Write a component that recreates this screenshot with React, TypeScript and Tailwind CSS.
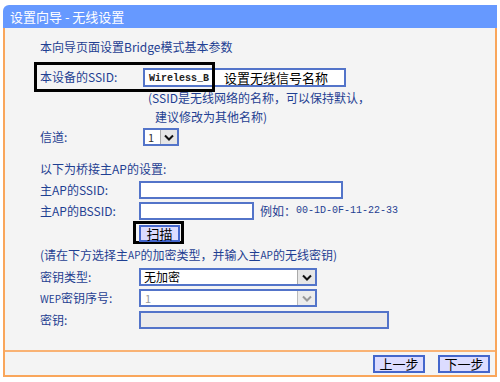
import React from "react";

const Chevron = ({ color = "#111" }: { color?: string }) => (
  <svg width="10" height="7" viewBox="0 0 10 7">
    <path d="M1 1.5 L5 5.5 L9 1.5" fill="none" stroke={color} strokeWidth="2" />
  </svg>
);

export default function App() {
  return (
    <div className="w-[500px] h-[382px] bg-white pt-[5px] px-[3px] font-['Noto_Sans_CJK_SC',sans-serif]">
      <div className="h-[23px] bg-[#6699ff] rounded-tl-[6px] flex items-center pl-[7px] text-white text-[13px] leading-none">
        设置向导 - 无线设置
      </div>
      <div className="h-[349px] w-[494px] border-l-2 border-r-2 border-b-2 border-[#f9a65b] bg-[#f4f4f4] flex flex-col">
        <div className="h-[322px] flex flex-col pl-[35px] text-[12px] text-[#1f3f92] leading-none">
          <div className="mt-[10px] h-[18px] flex items-center">本向导页面设置Bridge模式基本参数</div>

          <div className="mt-[6px] h-[30px] relative flex items-center">
            <span className="w-[103px]">本设备的SSID:</span>
            <div className="h-[19px] w-[203px] border-2 border-[#5374c9] bg-white flex items-center pl-[4px]">
              <span className="font-['Liberation_Mono',monospace] font-bold text-[10px] leading-[15px] text-[#222] translate-y-[1px]">Wireless_B</span>
              <span className="ml-[15px] text-[13px] leading-[15px] text-black">设置无线信号名称</span>
            </div>
            <div className="absolute left-[-6px] top-0 w-[181px] h-[30px] border-[3px] border-black"></div>
          </div>

          <div className="mt-[-4px] flex flex-col">
            <div className="h-[19px] flex items-center pl-[108px]">(SSID是无线网络的名称，可以保持默认，</div>
            <div className="h-[19px] flex items-center pl-[115px]">建议修改为其他名称)</div>
          </div>

          <div className="mt-[1px] h-[20px] flex items-center">
            <span className="w-[103px]">信道:</span>
            <div className="h-[18px] w-[36px] border-2 border-[#5374c9] bg-white flex">
              <span className="w-[15px] pl-[3px] flex items-center text-[11px] text-[#333]">1</span>
              <span className="flex-1 bg-[#e6e6e6] border-l border-[#aaa] flex items-center justify-center">
                <Chevron />
              </span>
            </div>
          </div>

          <div className="mt-[13px] h-[18px] flex items-center">以下为桥接主AP的设置:</div>

          <div className="mt-[2px] h-[20px] flex items-center">
            <span className="w-[99px]">主AP的SSID:</span>
            <div className="h-[18px] w-[204px] border-2 border-[#5374c9] bg-white"></div>
          </div>

          <div className="mt-[1px] h-[20px] flex items-center">
            <span className="w-[99px]">主AP的BSSID:</span>
            <div className="h-[18px] w-[115px] border-2 border-[#5374c9] bg-white"></div>
            <span className="ml-[6px]">例如：</span>
            <span className="font-['Liberation_Mono',monospace] text-[10px]">00-1D-0F-11-22-33</span>
          </div>

          <div className="h-[23px] flex">
            <div className="ml-[93px] w-[51px] h-[23px] border-[3px] border-black pl-[3px] pt-[1px]">
              <div className="w-[41px] h-[17px] bg-[#dcdcff] border-2 border-[#4466cc] flex items-center justify-center text-[13px] text-black">
                扫描
              </div>
            </div>
          </div>

          <div className="mt-[2px] h-[18px] flex items-center">(请在下方选择主<span className="text-[10px]">AP</span>的加密类型，并输入主<span className="text-[10px]">AP</span>的无线密钥)</div>

          <div className="mt-[3px] h-[20px] flex items-center">
            <span className="w-[99px]">密钥类型:</span>
            <div className="h-[18px] w-[178px] border-2 border-[#5374c9] bg-white flex">
              <span className="flex-1 pl-[3px] flex items-center text-[12px] text-black">无加密</span>
              <span className="w-[18px] bg-[#e6e6e6] border-l border-[#aaa] flex items-center justify-center">
                <Chevron />
              </span>
            </div>
          </div>

          <div className="mt-[1px] h-[20px] flex items-center">
            <span className="w-[99px]"><span className="text-[10px]">WEP</span>密钥序号:</span>
            <div className="h-[18px] w-[178px] border-2 border-[#5374c9] bg-white flex">
              <span className="flex-1 pl-[4px] flex items-center text-[11px] text-[#999]">1</span>
              <span className="w-[18px] bg-[#ececec] border-l border-[#bbb] flex items-center justify-center">
                <Chevron color="#999" />
              </span>
            </div>
          </div>

          <div className="mt-[2px] h-[20px] flex items-center">
            <span className="w-[99px]">密钥:</span>
            <div className="h-[18px] w-[250px] border-2 border-[#5374c9] bg-[#ebebeb]"></div>
          </div>
        </div>
        <div className="border-t-2 border-[#f9b274] flex-1 flex items-center justify-end pr-[5px] gap-[13px]">
          <div className="w-[52px] h-[18px] bg-[#dcdcff] border-2 border-[#4466cc] flex items-center justify-center text-[13px] text-black leading-none">上一步</div>
          <div className="w-[52px] h-[18px] bg-[#dcdcff] border-2 border-[#4466cc] flex items-center justify-center text-[13px] text-black leading-none">下一步</div>
        </div>
      </div>
    </div>
  );
}
